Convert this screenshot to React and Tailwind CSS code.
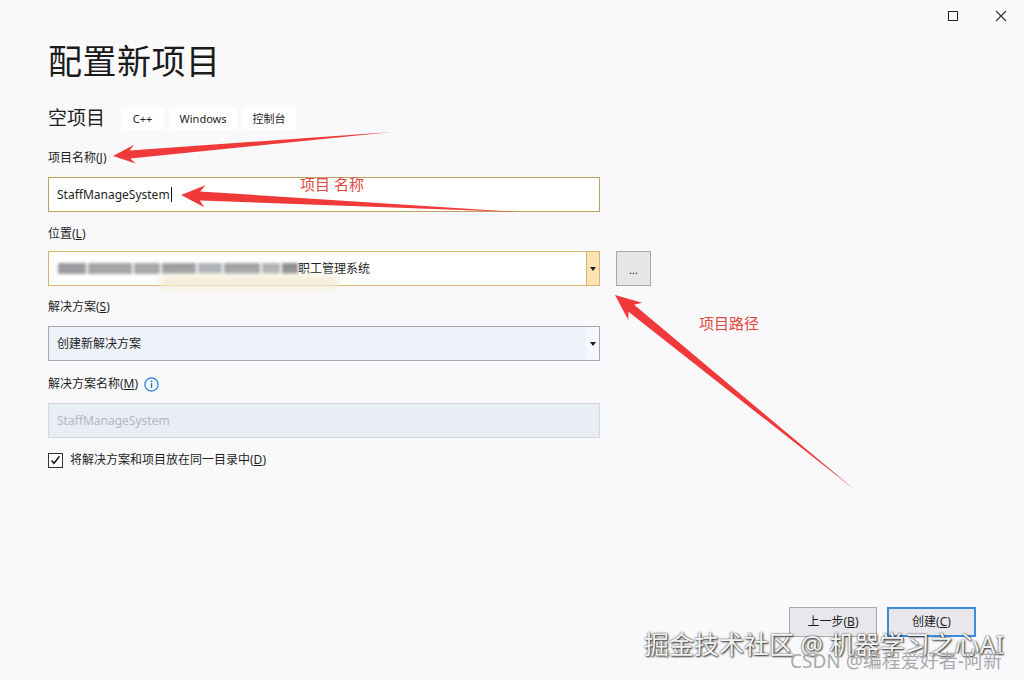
import React from "react";

// red annotation arrow: thin tail, wide head
function arrowPoints(tail, tip, headLen, headW, shaftW) {
  const dx = tip[0] - tail[0];
  const dy = tip[1] - tail[1];
  const len = Math.hypot(dx, dy);
  const ux = dx / len;
  const uy = dy / len;
  const nx = -uy;
  const ny = ux;
  const bx = tip[0] - ux * headLen;
  const by = tip[1] - uy * headLen;
  const sx = tip[0] - ux * (headLen - 5);
  const sy = tip[1] - uy * (headLen - 5);
  const pts = [
    [tail[0], tail[1]],
    [sx + (nx * shaftW) / 2, sy + (ny * shaftW) / 2],
    [bx + (nx * headW) / 2, by + (ny * headW) / 2],
    [tip[0], tip[1]],
    [bx - (nx * headW) / 2, by - (ny * headW) / 2],
    [sx - (nx * shaftW) / 2, sy - (ny * shaftW) / 2],
  ];
  return pts.map((p) => p.join(",")).join(" ");
}

function Label({ children, className = "" }) {
  return <div className={`text-[12px] leading-[16px] text-[#1e1e1e] ${className}`}>{children}</div>;
}

function Caret() {
  return (
    <svg width="6" height="4" viewBox="0 0 6 4">
      <path d="M0 0h6L3 4z" fill="#1e1e1e" />
    </svg>
  );
}

export default function App() {
  const blur = [
    [0, 28, "#9c9ca0"],
    [30, 44, "#a5a5a8"],
    [76, 26, "#a8a8ab"],
    [104, 34, "#9e9ea2"],
    [140, 24, "#b0b4b8"],
    [166, 36, "#a2a2a6"],
    [204, 18, "#b3b3b6"],
    [224, 16, "#8e8e92"],
  ];

  return (
    <div className="relative w-[1024px] h-[680px] overflow-hidden bg-[#f9f9fb] font-['Noto_Sans','Noto_Sans_CJK_SC',sans-serif] text-[#1e1e1e]">
      {/* window controls */}
      <div className="absolute top-[11px] left-[948px] w-[10px] h-[10px] border border-[#222]" />
      <svg className="absolute top-[10px] left-[995px]" width="12" height="12" viewBox="0 0 12 12">
        <path d="M1 1L11 11M11 1L1 11" stroke="#333" strokeWidth="1.1" />
      </svg>

      <div className="flex flex-col pl-[48px] pt-[38px]">
        <h1 className="text-[34px] leading-[46px] font-normal text-[#1b1b1b] tracking-[0.5px]">配置新项目</h1>

        <div className="flex items-center mt-[22px] h-[24px]">
          <span className="text-[19px] leading-[24px] mr-[16px]">空项目</span>
          <div className="flex gap-[5px] text-[11px]">
            <span className="bg-white h-[23px] leading-[23px] w-[43px] text-center">C++</span>
            <span className="bg-white h-[23px] leading-[23px] w-[68px] text-center">Windows</span>
            <span className="bg-white h-[23px] leading-[23px] w-[54px] text-center">控制台</span>
          </div>
        </div>

        <Label className="mt-[20px]">
          项目名称(<span className="underline">J</span>)
        </Label>
        <div className="mt-[11px] w-[552px] h-[35px] border border-[#c0a060] bg-white flex items-center pl-[8px] text-[12px]">
          StaffManageSystem<span className="w-px h-[15px] bg-[#111] ml-[1px]" />
        </div>

        <Label className="mt-[14px]">
          位置(<span className="underline">L</span>)
        </Label>
        <div className="flex items-center mt-[9px]">
          <div className="w-[552px] h-[35px] border border-[#d8b56a] bg-white flex">
            <div className="flex-1 flex items-center pl-[9px] relative">
              <div className="relative w-[240px] h-[12px] blur-[1.5px]">
                {blur.map(([l, w, c], i) => (
                  <div key={i} className="absolute top-0 h-[11px]" style={{ left: l, width: w, background: c }} />
                ))}
              </div>
              <div className="absolute left-[110px] top-[24px] w-[180px] h-[12px] rounded-full bg-[#f4ead2] blur-[4px]" />
              <span className="text-[12px]">职工管理系统</span>
            </div>
            <div className="w-[13px] bg-[#fde2b4] border-l border-[#d8b56a] flex items-center justify-center">
              <Caret />
            </div>
          </div>
          <div className="ml-[16px] w-[35px] h-[35px] bg-[#e7e7ea] border border-[#a9a9ad] flex items-end justify-center pb-[10px] text-[11px] leading-none">
            ...
          </div>
        </div>

        <Label className="mt-[13px]">
          解决方案(<span className="underline">S</span>)
        </Label>
        <div className="mt-[11px] w-[552px] h-[35px] border border-[#a8a8b0] bg-[#eef2fb] flex items-center text-[12px]">
          <span className="flex-1 pl-[8px]">创建新解决方案</span>
          <div className="w-[13px] h-full bg-[#f6f8fd] flex items-center justify-center">
            <Caret />
          </div>
        </div>

        <div className="flex items-center mt-[15px] h-[16px]">
          <Label>
            解决方案名称(<span className="underline">M</span>)
          </Label>
          <svg className="ml-[6px]" width="15" height="15" viewBox="0 0 15 15">
            <circle cx="7.5" cy="7.5" r="6.6" fill="none" stroke="#1d7ad8" strokeWidth="1.2" />
            <circle cx="7.5" cy="4.4" r="0.9" fill="#1d7ad8" />
            <rect x="6.8" y="6.2" width="1.4" height="4.8" fill="#1d7ad8" />
          </svg>
        </div>
        <div className="mt-[11px] w-[552px] h-[35px] border border-[#d3d8e0] bg-[#e9edf4] flex items-center pl-[8px] text-[12px] text-[#b4b8c0]">
          StaffManageSystem
        </div>

        <div className="flex items-center mt-[13px]">
          <div className="w-[15px] h-[15px] border border-[#333] bg-white flex items-center justify-center">
            <svg width="11" height="10" viewBox="0 0 11 10">
              <path d="M1.5 5.5L4 8.3L9.5 1.2" fill="none" stroke="#111" strokeWidth="1.4" />
            </svg>
          </div>
          <span className="ml-[7px] text-[12px]">
            将解决方案和项目放在同一目录中(<span className="underline">D</span>)
          </span>
        </div>
      </div>

      <div className="absolute left-[789px] top-[607px] flex gap-[10px] text-[12px]">
        <div className="w-[88px] h-[30px] bg-[#e8e8ec] border border-[#a9a9ad] flex items-center justify-center">
          上一步(<span className="underline">B</span>)
        </div>
        <div className="w-[89px] h-[30px] bg-[#e8e8ec] border-2 border-[#3b8de0] flex items-center justify-center">
          创建(<span className="underline">C</span>)
        </div>
      </div>

      {/* annotations */}
      <svg className="absolute inset-0 pointer-events-none" width="1024" height="680">
        <polygon points={arrowPoints([392, 132], [113, 156], 22, 19, 8)} fill="#f03a3a" />
        <polygon points={arrowPoints([518, 212], [181, 195], 24, 22, 9)} fill="#f03a3a" />
        <polygon points={arrowPoints([855, 490], [615, 295], 26, 22, 9)} fill="#f03a3a" />
      </svg>
      <div className="absolute left-[300px] top-[174px] text-[15px] leading-[20px] text-[#e2463f]">项目 名称</div>
      <div className="absolute left-[699px] top-[313px] text-[15px] leading-[20px] text-[#e2463f]">项目路径</div>

      {/* watermarks */}
      <div className="absolute left-[644px] top-[628px] text-[25px] leading-[32px] text-[#f4f4f4] [text-shadow:0_0_2px_#333,1px_1px_2px_#333]">
        掘金技术社区 @ 机器学习之心AI
      </div>
      <div className="absolute left-[790px] top-[649px] text-[19px] leading-[24px] text-[#a9a9ad]">
        CSDN @编程爱好者-阿新
      </div>
    </div>
  );
}
